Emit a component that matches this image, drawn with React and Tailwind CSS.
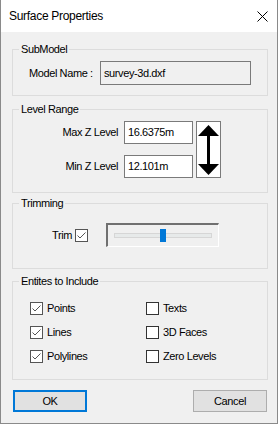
// Surface Properties dialog

function Check({ checked }) {
  return (
    <span
      className={
        "flex h-[13px] w-[13px] shrink-0 items-center justify-center border bg-white " +
        (checked ? "border-[#555555]" : "border-[#333333]")
      }
    >
      {checked && (
        <svg width="11" height="11" viewBox="0 0 11 11">
          <polyline points="1.5,5.5 4,8 9.5,2.5" fill="none" stroke="#555555" strokeWidth="1" />
        </svg>
      )}
    </span>
  )
}

function Group({ label, className, children }) {
  return (
    <div className={"relative border border-[#dcdcdc] " + className}>
      <span className="absolute -top-[8px] left-[6px] bg-[#f0f0f0] px-[2px] leading-[14px]">{label}</span>
      {children}
    </div>
  )
}

export default function App() {
  return (
    <div
      className="flex h-[424px] w-[278px] flex-col border-b border-l border-r border-[#8a8a8a] bg-[#f0f0f0] text-[11px] tracking-[-0.4px] text-black"
      style={{ fontFamily: '"Liberation Sans", Arial, sans-serif' }}
    >
      {/* title bar */}
      <div className="flex h-[32px] shrink-0 items-center justify-between bg-white pl-[8px] pr-[9px]">
        <span className="text-[12px] tracking-[-0.3px]">Surface Properties</span>
        <svg width="11" height="11" viewBox="0 0 11 11">
          <path d="M0.5 0.5 L10.5 10.5 M10.5 0.5 L0.5 10.5" stroke="#000" strokeWidth="1" />
        </svg>
      </div>

      <div className="flex flex-col pl-[11px] pr-[9px] pt-[17px]">
        {/* SubModel */}
        <Group label="SubModel" className="h-[47px]">
          <div className="flex items-center pl-[16px] pt-[11px]">
            <span className="w-[71px]">Model Name :</span>
            <div className="flex h-[24px] w-[151px] items-center border border-[#7a7a7a] bg-[#f0f0f0] pl-[3px]">
              survey-3d.dxf
            </div>
          </div>
        </Group>

        {/* Level Range */}
        <Group label="Level Range" className="mt-[13px] h-[84px]">
          <div className="flex pt-[11px]">
            <div className="flex flex-col gap-[11px]">
              <div className="flex items-center">
                <span className="w-[105px] text-right">Max Z Level</span>
                <div className="ml-[6px] flex h-[23px] w-[69px] items-center border border-[#7a7a7a] bg-white pl-[3px]">
                  16.6375m
                </div>
              </div>
              <div className="flex items-center">
                <span className="w-[105px] text-right">Min Z Level</span>
                <div className="ml-[6px] flex h-[23px] w-[69px] items-center border border-[#7a7a7a] bg-white pl-[3px]">
                  12.101m
                </div>
              </div>
            </div>
            <div className="ml-[3px] flex h-[57px] w-[25px] items-center justify-center border border-[#7a7a7a] bg-white">
              <svg width="23" height="55" viewBox="0 0 23 55">
                <polygon points="11.5,3 22,14 1,14" fill="#000" />
                <rect x="10" y="13" width="3" height="30" fill="#000" />
                <polygon points="1,42 22,42 11.5,53" fill="#000" />
              </svg>
            </div>
          </div>
        </Group>

        {/* Trimming */}
        <Group label="Trimming" className="mt-[10px] h-[66px]">
          <div className="flex items-center pt-[19px]">
            <span className="w-[59px] text-right">Trim</span>
            <span className="ml-[3px]">
              <Check checked />
            </span>
            <div className="ml-[18px] flex h-[24px] w-[113px] items-center border-b border-l-2 border-r border-t-2 border-b-white border-l-[#707070] border-r-white border-t-[#707070] pl-[6px]">
              <div className="relative h-[5px] w-[98px] border border-[#d6d6d6] bg-[#e7eaea]">
                <div className="absolute -top-[5px] left-[45px] h-[13px] w-[6px] bg-[#0078d7]" />
              </div>
            </div>
          </div>
        </Group>

        {/* Entities */}
        <Group label="Entites to Include" className="mt-[12px] h-[99px]">
          <div className="grid grid-cols-[116px_1fr] gap-y-[11px] pl-[17px] pt-[20px]">
            <label className="flex h-[13px] items-center gap-[4px]">
              <Check checked />
              <span>Points</span>
            </label>
            <label className="flex h-[13px] items-center gap-[4px]">
              <Check />
              <span>Texts</span>
            </label>
            <label className="flex h-[13px] items-center gap-[4px]">
              <Check checked />
              <span>Lines</span>
            </label>
            <label className="flex h-[13px] items-center gap-[4px]">
              <Check />
              <span>3D Faces</span>
            </label>
            <label className="flex h-[13px] items-center gap-[4px]">
              <Check checked />
              <span>Polylines</span>
            </label>
            <label className="flex h-[13px] items-center gap-[4px]">
              <Check />
              <span>Zero Levels</span>
            </label>
          </div>
        </Group>

        {/* buttons */}
        <div className="mt-[10px] flex justify-between pl-[1px] pr-[1px]">
          <button className="flex h-[22px] w-[74px] items-center justify-center border-2 border-[#0078d7] bg-[#e1e1e1]">
            OK
          </button>
          <button className="flex h-[22px] w-[74px] items-center justify-center border border-[#adadad] bg-[#e1e1e1]">
            Cancel
          </button>
        </div>
      </div>
    </div>
  )
}
